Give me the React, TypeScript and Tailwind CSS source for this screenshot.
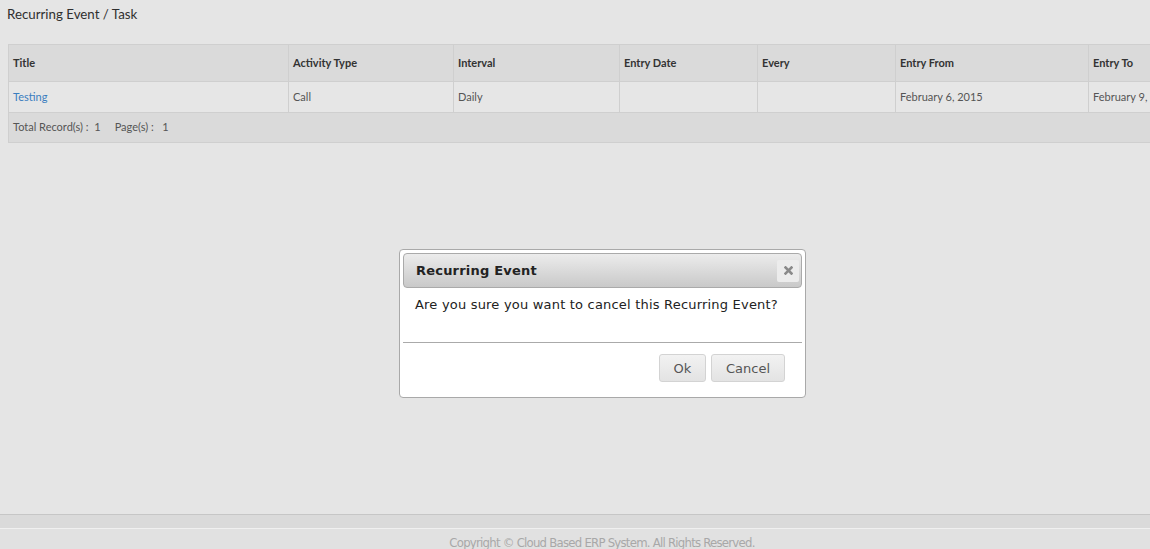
import React from "react";

const columns = [
  { label: "Title", width: "w-[280px]" },
  { label: "Activity Type", width: "w-[165px]" },
  { label: "Interval", width: "w-[166px]" },
  { label: "Entry Date", width: "w-[138px]" },
  { label: "Every", width: "w-[138px]" },
  { label: "Entry From", width: "w-[193px]" },
  { label: "Entry To", width: "w-[160px]" },
];

const row = ["Testing", "Call", "Daily", "", "", "February 6, 2015", "February 9, 2015"];

const App: React.FC = () => {
  return (
    <div className="relative h-[549px] w-[1150px] overflow-hidden bg-[#e5e5e5] font-['Lato',sans-serif]">
      {/* Page content */}
      <div className="h-[514px] overflow-hidden pl-[8px]">
        <h1 className="-ml-[1px] pt-[5px] text-[13.3px] leading-[18px] text-[#2f2f2f]">Recurring Event / Task</h1>

        <table className="mt-[21px] w-[1240px] min-w-[1240px] table-fixed border-collapse text-[11px]">
          <colgroup>
            {columns.map((c) => (
              <col key={c.label} className={c.width} />
            ))}
          </colgroup>
          <thead>
            <tr className="h-[37px] bg-[#dadada]">
              {columns.map((c) => (
                <th key={c.label} className="border border-[#cfcfcf] px-[4px] text-left font-bold text-[#333]">
                  {c.label}
                </th>
              ))}
            </tr>
          </thead>
          <tbody>
            <tr className="h-[31px] bg-[#e6e6e6]">
              {row.map((v, i) => (
                <td
                  key={i}
                  className={`border border-[#cfcfcf] px-[4px] whitespace-nowrap ${
                    i === 0 ? "text-[#3a7dbf]" : "text-[#555]"
                  }`}
                >
                  {v}
                </td>
              ))}
            </tr>
            <tr className="h-[30px] bg-[#dadada]">
              <td colSpan={7} className="border border-[#cfcfcf] px-[4px] text-[#555]">
                Total Record(s) :&nbsp; 1 &nbsp;&nbsp;&nbsp; Page(s) :&nbsp;&nbsp; 1
              </td>
            </tr>
          </tbody>
        </table>
      </div>

      {/* Footer */}
      <div className="border-t border-[#c6c6c6] bg-[#dcdcdc]">
        <div className="h-[14px] border-b border-[#f0f0f0] bg-[#dadada]" />
        <div className="h-[20px] bg-[#e1e1e1] pl-[54px] pt-[6px] text-center font-['DejaVu_Sans_Condensed','DejaVu_Sans',sans-serif] text-[13px] leading-[16px] tracking-[-0.75px] text-[#a8a8a8]">
          Copyright © Cloud Based ERP System. All Rights Reserved.
        </div>
      </div>

      {/* Confirm dialog */}
      <div className="absolute left-[399px] top-[249px] h-[149px] w-[407px] rounded-[4px] border border-[#a9a9a9] bg-white p-[3px] font-['DejaVu_Sans','Verdana',sans-serif]">
        <div className="flex h-[35px] items-center justify-between rounded-[4px] border border-[#aaa] bg-gradient-to-b from-[#ececec] to-[#c9c9c9] pl-[12px] pr-[2px]">
          <span className="text-[13px] font-bold tracking-[0.2px] text-[#222]">Recurring Event</span>
          <button className="flex h-[22px] w-[22px] items-center justify-center rounded-[2px] bg-[#ececec]">
            <svg width="9" height="9" viewBox="0 0 9 9">
              <path d="M1.5 1.5 L7.5 7.5 M7.5 1.5 L1.5 7.5" stroke="#8a8a8a" strokeWidth="2.6" strokeLinecap="square" />
            </svg>
          </button>
        </div>
        <p className="px-[12px] pt-[8px] text-[13px] leading-[18px] tracking-[0.2px] text-[#222]">
          Are you sure you want to cancel this Recurring Event?
        </p>
        <div className="mt-[28px] border-t border-[#aaa]" />
        <div className="flex justify-end gap-[5px] pr-[17px] pt-[11px]">
          <button className="h-[28px] w-[47px] rounded-[3px] border border-[#d3d3d3] bg-gradient-to-b from-[#f2f2f2] to-[#e3e3e3] pt-[1px] text-[13px] text-[#555]">
            Ok
          </button>
          <button className="h-[28px] w-[74px] rounded-[3px] border border-[#d3d3d3] bg-gradient-to-b from-[#f2f2f2] to-[#e3e3e3] pt-[1px] text-[13px] text-[#555]">
            Cancel
          </button>
        </div>
      </div>
    </div>
  );
};

export default App;
